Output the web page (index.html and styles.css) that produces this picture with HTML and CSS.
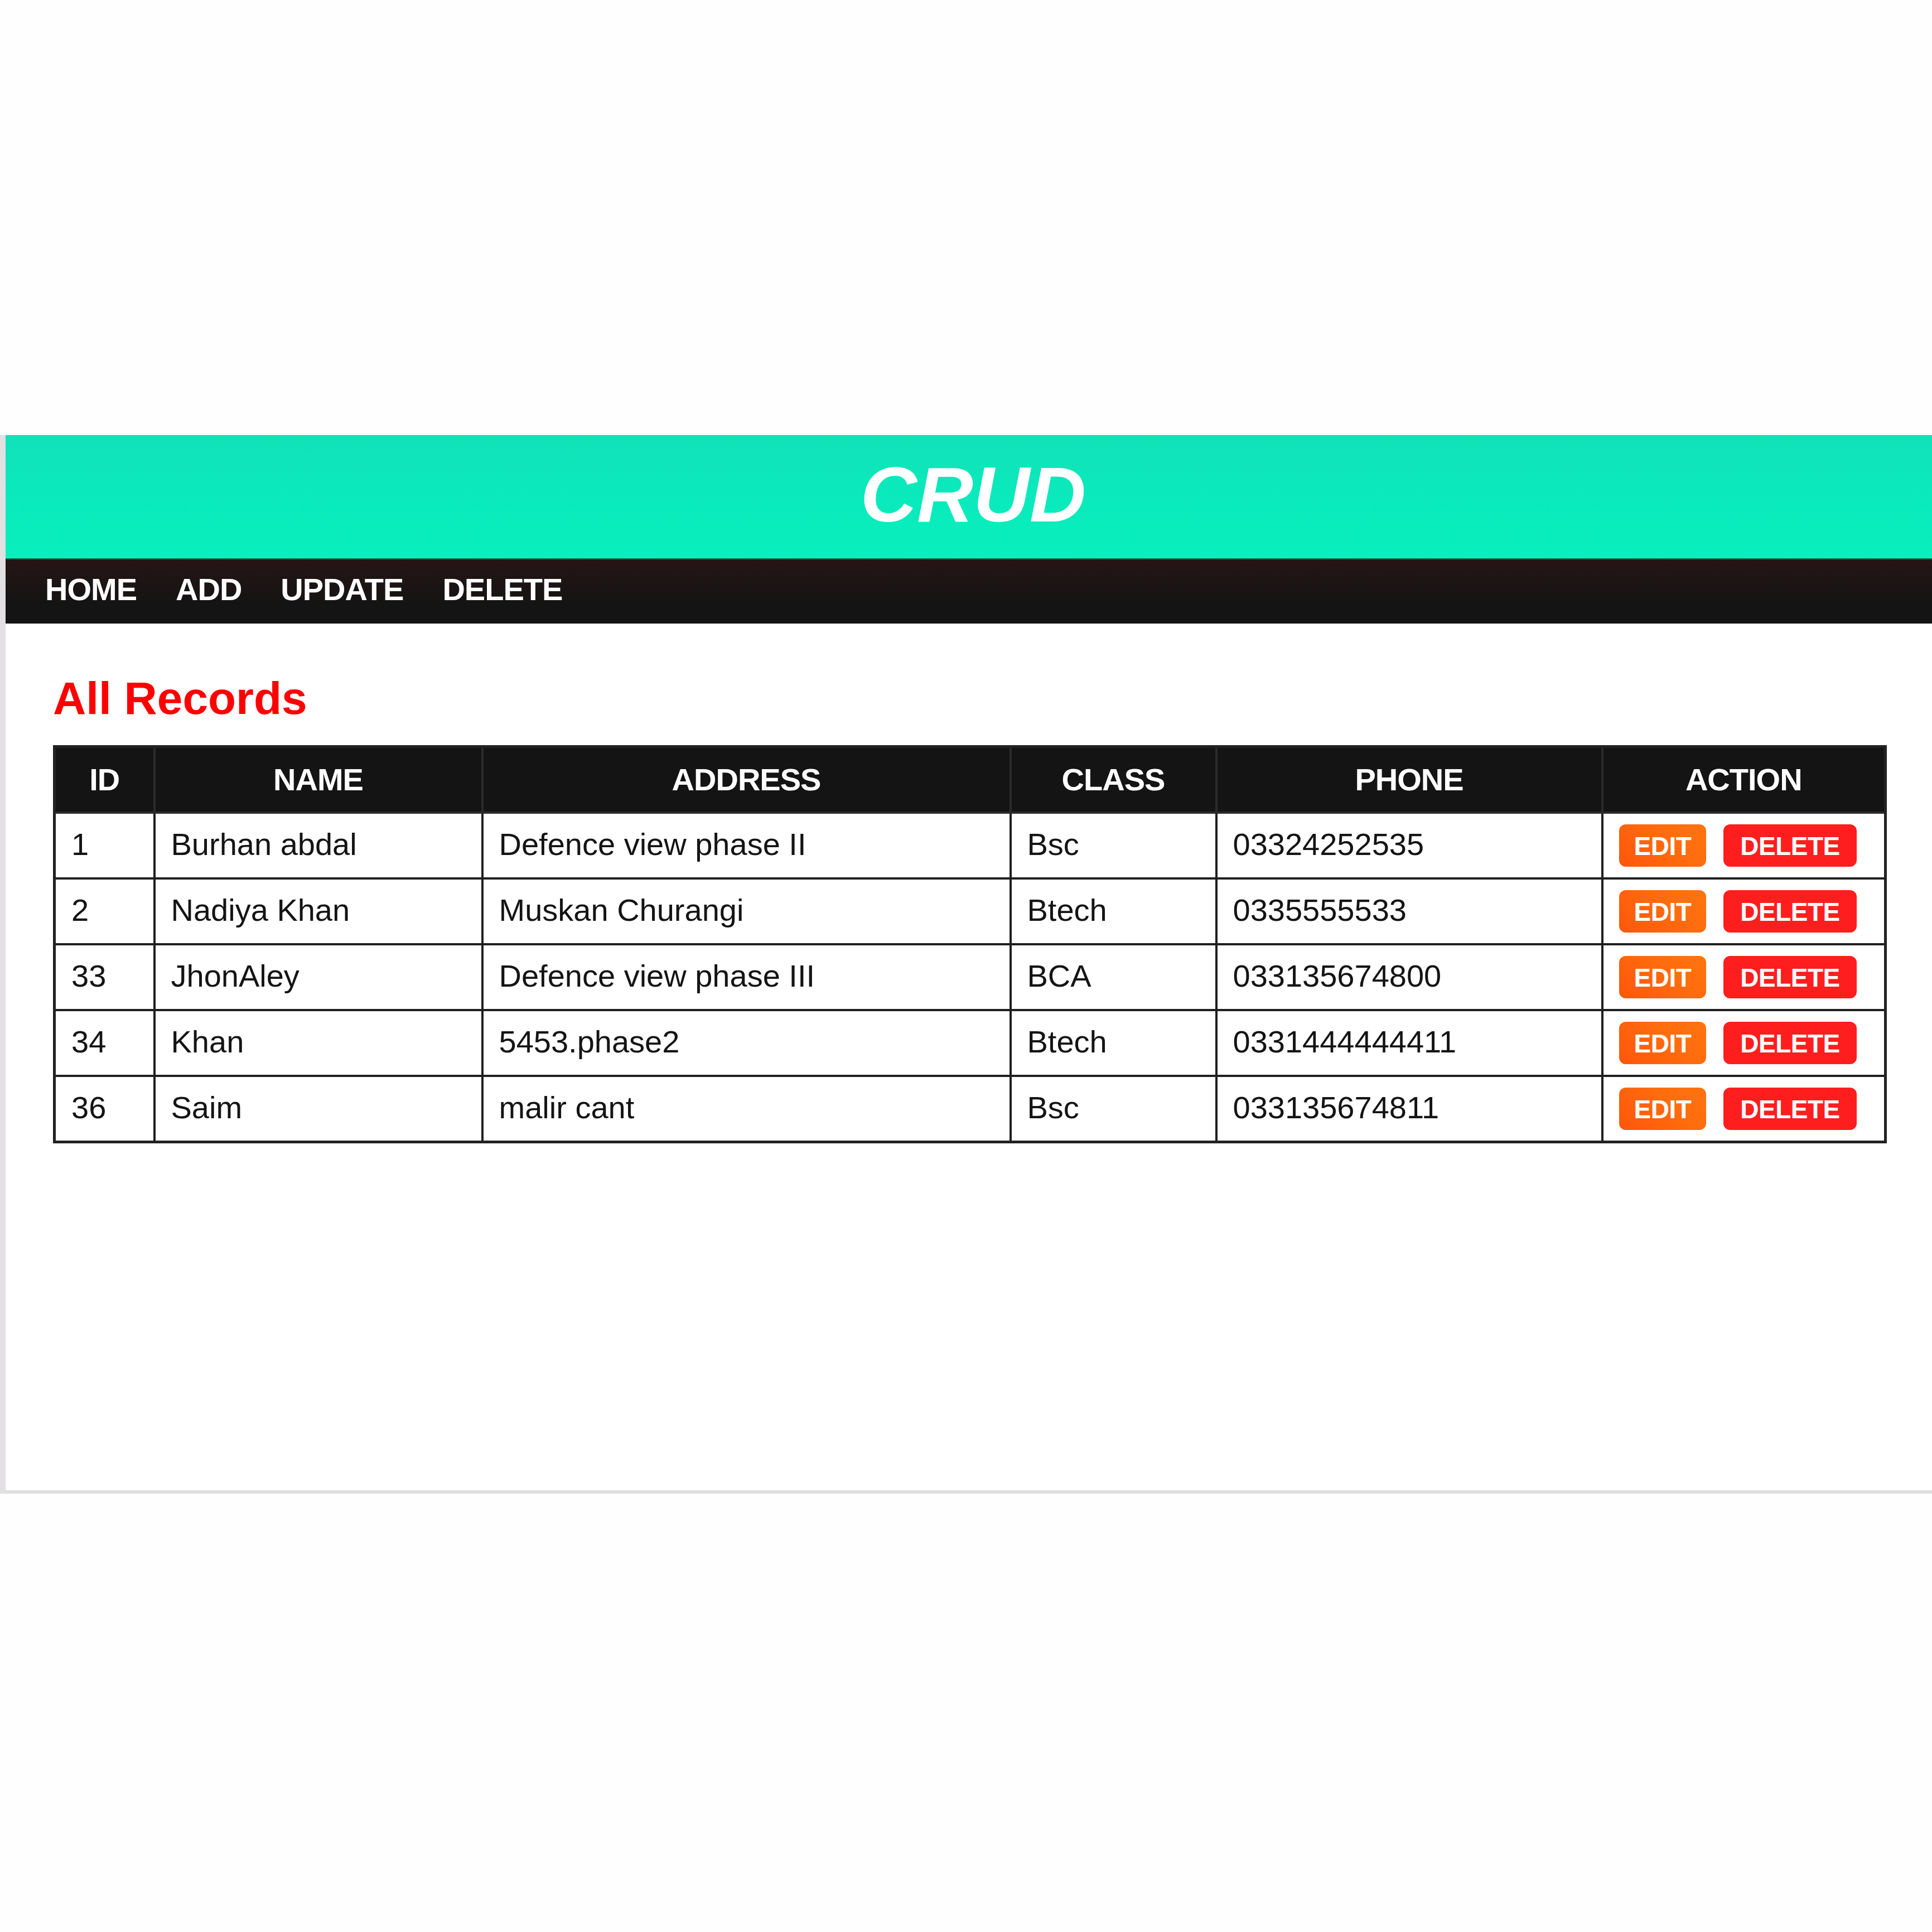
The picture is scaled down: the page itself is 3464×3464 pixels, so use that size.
FILE: index.html
```html
<!DOCTYPE html>
<html lang="en">
<head>
<meta charset="utf-8">
<title>CRUD</title>
<link rel="stylesheet" href="styles.css">
</head>
<body>
<div class="page">
  <div class="frame">
    <header class="banner"><h1 class="brand">CRUD</h1></header>
    <nav class="menu">
      <a class="menu-link" href="#">HOME</a>
      <a class="menu-link" href="#">ADD</a>
      <a class="menu-link" href="#">UPDATE</a>
      <a class="menu-link" href="#">DELETE</a>
    </nav>
    <main class="content">
      <h2 class="title">All Records</h2>
      <table class="records">
        <colgroup>
          <col class="c-id"><col class="c-name"><col class="c-addr"><col class="c-class"><col class="c-phone"><col class="c-action">
        </colgroup>
        <thead>
          <tr><th>ID</th><th>NAME</th><th>ADDRESS</th><th>CLASS</th><th>PHONE</th><th>ACTION</th></tr>
        </thead>
        <tbody>
          <tr><td>1</td><td>Burhan abdal</td><td>Defence view phase II</td><td>Bsc</td><td>03324252535</td><td><div class="actions"><a class="btn btn-edit" href="#">EDIT</a><a class="btn btn-delete" href="#">DELETE</a></div></td></tr>
          <tr><td>2</td><td>Nadiya Khan</td><td>Muskan Churangi</td><td>Btech</td><td>0335555533</td><td><div class="actions"><a class="btn btn-edit" href="#">EDIT</a><a class="btn btn-delete" href="#">DELETE</a></div></td></tr>
          <tr><td>33</td><td>JhonAley</td><td>Defence view phase III</td><td>BCA</td><td>033135674800</td><td><div class="actions"><a class="btn btn-edit" href="#">EDIT</a><a class="btn btn-delete" href="#">DELETE</a></div></td></tr>
          <tr><td>34</td><td>Khan</td><td>5453.phase2</td><td>Btech</td><td>0331444444411</td><td><div class="actions"><a class="btn btn-edit" href="#">EDIT</a><a class="btn btn-delete" href="#">DELETE</a></div></td></tr>
          <tr><td>36</td><td>Saim</td><td>malir cant</td><td>Bsc</td><td>033135674811</td><td><div class="actions"><a class="btn btn-edit" href="#">EDIT</a><a class="btn btn-delete" href="#">DELETE</a></div></td></tr>
        </tbody>
      </table>
    </main>
  </div>
</div>
</body>
</html>
```

FILE: styles.css
```css
html, body {
  margin: 0;
  padding: 0;
  background: #fefefe;
  font-family: "Liberation Sans", Arial, sans-serif;
}

.page {
  padding-top: 780px;
}

.frame {
  height: 1892px;
  border-left: 10px solid #e2e0e2;
  border-bottom: 6px solid #dedede;
  background: #ffffff;
  display: flex;
  flex-direction: column;
}

.banner {
  height: 221px;
  background: linear-gradient(180deg, #12e1b8 0%, #0aeabc 50%, #08efbd 100%);
  display: flex;
  align-items: center;
  justify-content: center;
}

.brand {
  margin: 0;
  font-size: 140px;
  line-height: 1;
  font-weight: 700;
  font-style: italic;
  color: #ffffff;
  transform: translate(8px, -4px);
}

.menu {
  height: 117px;
  background: linear-gradient(180deg, #261515 0%, #1d1414 35%, #141414 70%);
  border-top: 2px solid #0c6a54;
  box-sizing: border-box;
  display: flex;
  align-items: center;
  gap: 70px;
  padding-left: 71px;
  padding-bottom: 8px;
}

.menu-link {
  color: #ffffff;
  text-decoration: none;
  font-size: 56px;
  font-weight: 700;
  letter-spacing: -1px;
  line-height: 1;
}

.content {
  padding: 93px 86px 0 85px;
}

.title {
  margin: 0 0 43px;
  font-size: 82px;
  line-height: 82px;
  font-weight: 700;
  color: #ff0000;
}

.records {
  width: 100%;
  table-layout: fixed;
  border-collapse: collapse;
  border: 5px solid #222222;
}

.c-id { width: 179px; }
.c-name { width: 588px; }
.c-addr { width: 947px; }
.c-class { width: 369px; }
.c-phone { width: 692px; }
.c-action { width: 508px; }

.records th {
  background: #141414;
  color: #ffffff;
  font-size: 56px;
  font-weight: 700;
  letter-spacing: -1px;
  line-height: 76px;
  padding: 19px 20px 19px;
  text-align: center;
  border: 4px solid #2b2b2b;
}

.records td {
  font-size: 56px;
  line-height: 76px;
  color: #141414;
  padding: 17px 28px 21px;
  text-align: left;
  vertical-align: middle;
  border: 4px solid #1f1f1f;
  white-space: nowrap;
}

.actions {
  display: flex;
  gap: 31px;
  transform: translateY(2px);
}

.btn {
  display: block;
  height: 76px;
  line-height: 78px;
  padding: 0 27px;
  border-radius: 12px;
  color: #ffffff;
  text-decoration: none;
  font-size: 46px;
  font-weight: 700;
  letter-spacing: -0.5px;
}

.btn-edit {
  background: linear-gradient(45deg, #ff560a 0%, #ff6c0e 60%, #ff730f 100%);
}

.btn-delete {
  background: #ff1e1e;
  padding: 0 30px;
}
```
